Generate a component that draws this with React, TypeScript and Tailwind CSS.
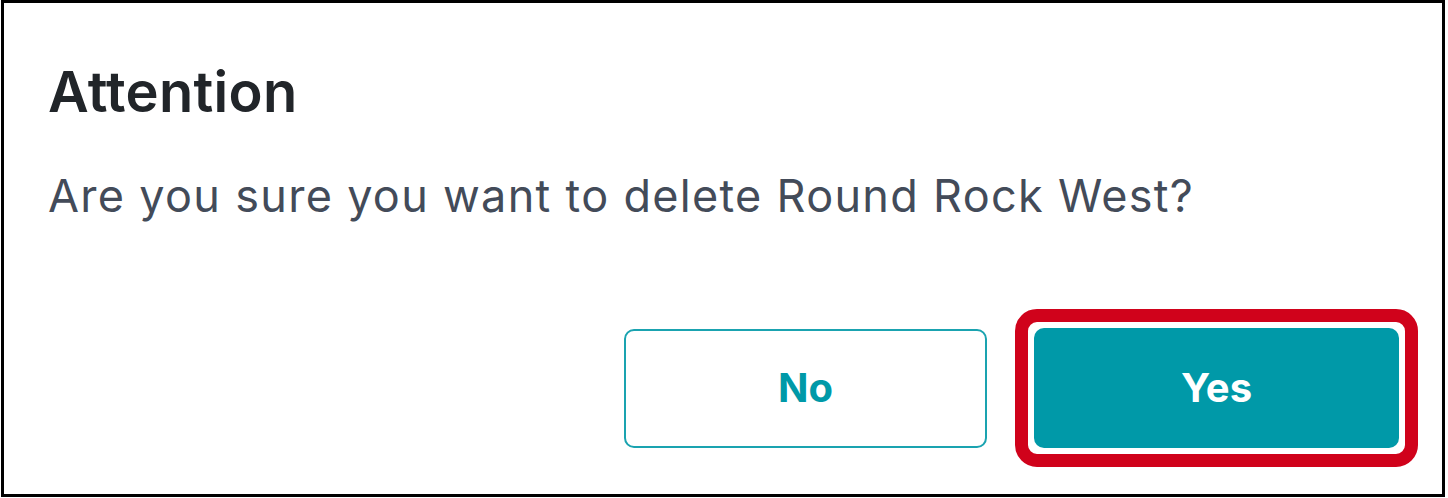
import React from "react";

export default function App() {
  return (
    <div className="w-[1448px] h-[498px] bg-white">
      <div
        className="ml-[1px] w-[1444px] h-[497px] border-[3px] border-black bg-white flex flex-col"
        style={{ fontFamily: "Inter, 'Noto Sans', sans-serif" }}
      >
        <h1 className="pl-[44px] pt-[61px] text-[56px] leading-[56px] font-semibold text-[#212529] tracking-[0.3px]">
          Attention
        </h1>
        <p className="pl-[44px] mt-[53px] text-[45px] leading-[45px] text-[#434b59] tracking-[1.3px]">
          Are you sure you want to delete Round Rock West?
        </p>
        <div className="mt-auto mb-[27px] mr-[24px] flex items-center justify-end gap-[28px]">
          <button className="w-[363px] h-[119px] rounded-[10px] border-2 border-[#1aa3b0] bg-white text-[40px] font-bold text-[#0099a8]">
            No
          </button>
          <div className="rounded-[22px] border-[13px] border-[#d0021b] p-[6px] bg-white">
            <button className="block w-[365px] h-[120px] rounded-[10px] bg-[#0099a8] text-[40px] font-bold text-white">
              Yes
            </button>
          </div>
        </div>
      </div>
    </div>
  );
}
